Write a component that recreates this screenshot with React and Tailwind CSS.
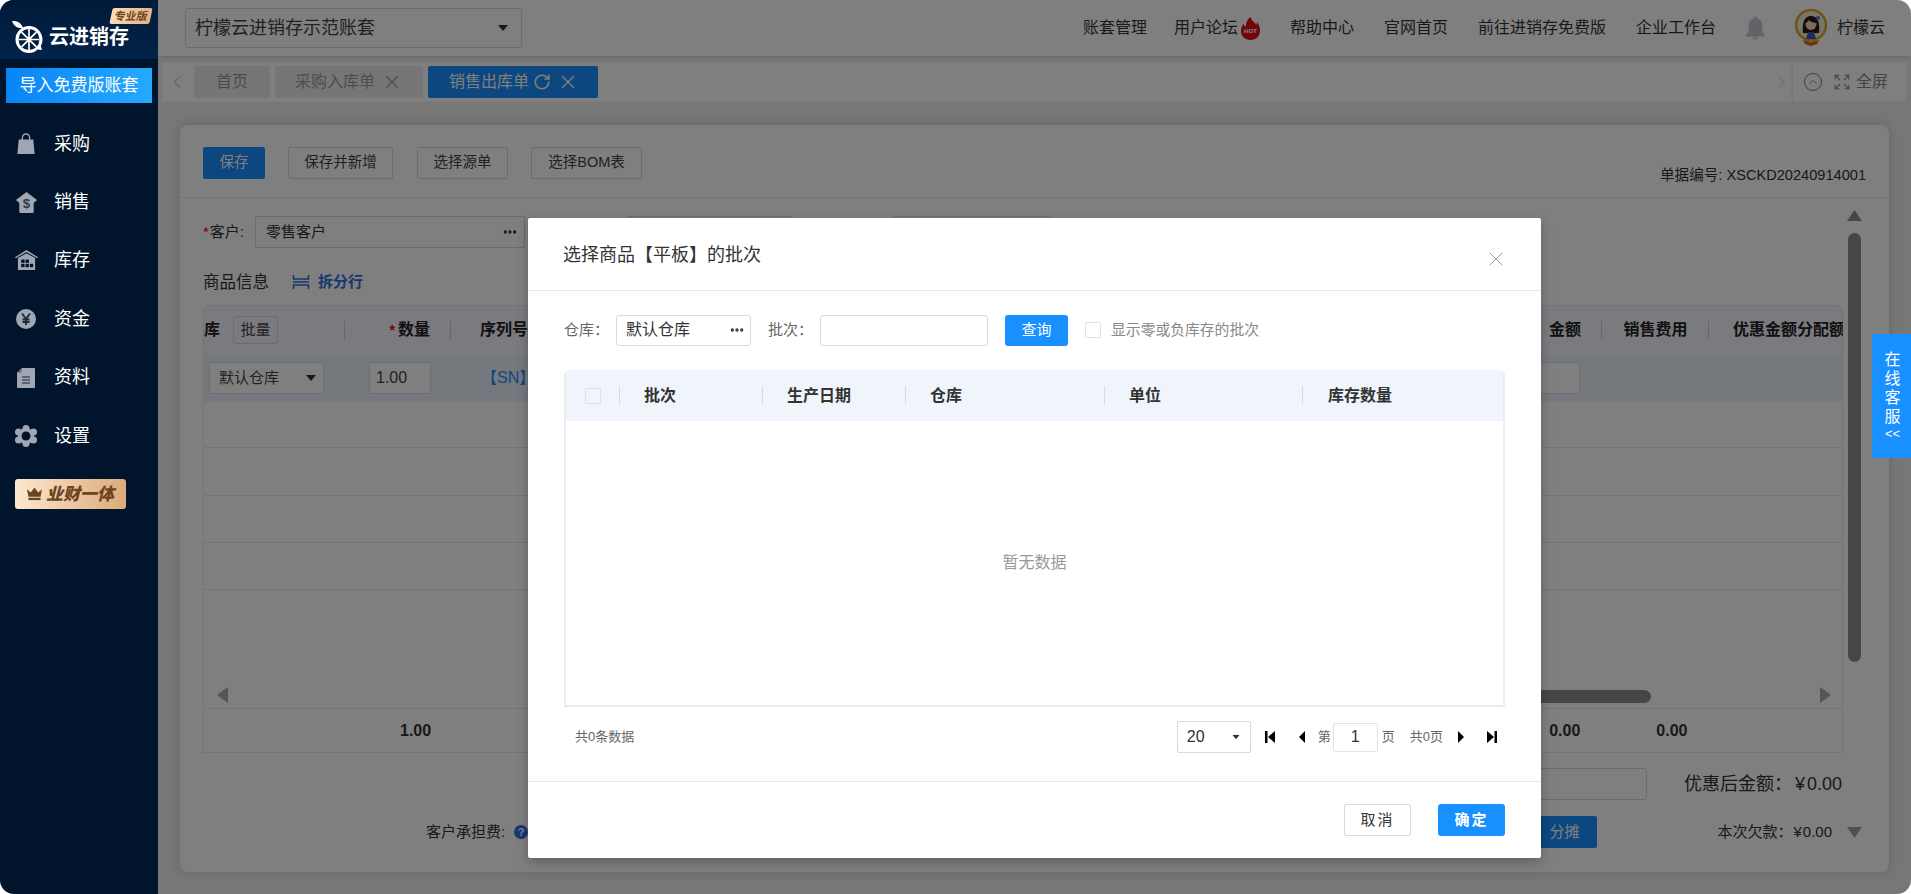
import React from "react";
import { X, RotateCw, ChevronLeft, ChevronRight, ChevronUp, Expand, Ellipsis } from "lucide-react";

const FONT = { fontFamily: '"Liberation Sans", "Noto Sans CJK SC", sans-serif' };

// sidebar icons
const BagIcon = () => (
  <svg width="20" height="22" viewBox="0 0 22 24" fill="#a0a7b2">
    <path d="M3 7h16l1.500 16H1.500z" />
    <path d="M7 9V5a4 4 0 0 1 8 0v4" fill="none" stroke="#a0a7b2" strokeWidth="1.500" />
  </svg>
);
const SaleIcon = () => (
  <svg width="23" height="23" viewBox="0 0 24 24">
    <path d="M12 1l11 8.500-3.500 3V22a1 1 0 0 1-1 1H5.500a1 1 0 0 1-1-1v-9.500L1 9.500z" fill="#a0a7b2" />
    <text x="12" y="17.500" textAnchor="middle" fontSize="14" fontWeight="700" fill="#2b3a4e" style={FONT}>$</text>
  </svg>
);
const HouseIcon = () => (
  <svg width="23" height="21" viewBox="0 0 24 22" fill="#a0a7b2">
    <path d="M12 0L24 7.500l-.8 1.200L12 2 .8 8.700 0 7.500z" />
    <path d="M3 8.500L12 3.500l9 5V21H3z" />
    <g fill="#00152b">
      <rect x="6.500" y="10" width="3.500" height="3.500" />
      <rect x="11" y="10" width="3.500" height="3.500" />
      <rect x="6.500" y="14.500" width="3.500" height="3.500" />
      <rect x="11" y="14.500" width="3.500" height="3.500" />
      <rect x="15.500" y="14.500" width="3.500" height="3.500" />
    </g>
  </svg>
);
const YuanIcon = () => (
  <svg width="20" height="20" viewBox="0 0 20 20">
    <circle cx="10" cy="10" r="10" fill="#a0a7b2" />
    <path d="M6 4.500l4 5.500 4-5.500M6.500 10.500h7M6.500 13h7M10 10v6" fill="none" stroke="#1d2b3f" strokeWidth="1.900" />
  </svg>
);
const DocIcon = () => (
  <svg width="18" height="20" viewBox="0 0 18 20">
    <path d="M5 0h12a1 1 0 0 1 1 1v18a1 1 0 0 1-1 1H1a1 1 0 0 1-1-1V5z" fill="#a0a7b2" />
    <path d="M0 4.500L4.500 0v4.500z" fill="#5d6877" />
    <path d="M5 9h8M5 12h8M5 15h8" stroke="#46525f" strokeWidth="1.300" />
  </svg>
);
const GearIcon = () => (
  <svg width="22" height="22" viewBox="0 0 22 22">
    <g fill="#a0a7b2">
      <circle cx="11" cy="3.500" r="3.500" />
      <circle cx="11" cy="18.500" r="3.500" />
      <circle cx="3.500" cy="7" r="3.500" />
      <circle cx="18.500" cy="7" r="3.500" />
      <circle cx="3.500" cy="15" r="3.500" />
      <circle cx="18.500" cy="15" r="3.500" />
      <circle cx="11" cy="11" r="8" />
    </g>
    <circle cx="11" cy="11" r="4.500" fill="#00152b" />
  </svg>
);

const LemonLogo = () => (
  <svg width="32" height="32" viewBox="0 0 32 32">
    <path d="M0 0c5-.5 9 1.500 11 7-5 .5-9-1.500-11-7z" fill="#fff" />
    <path d="M17 5c7.500 0 13.500 6 13.500 13.500 0 2.500-.6 4.500-1.700 6.400L30 29l-4.500-.6C23.200 30.700 20.300 32 17 32 9.500 32 3.500 26 3.500 18.500S9.500 5 17 5z" fill="#fff" />
    <circle cx="17" cy="18.500" r="10.500" fill="#02203f" />
    <path d="M17 8v21M6.500 18.500h21M9.600 11.100l14.800 14.800M24.400 11.100L9.600 25.900" stroke="#fff" strokeWidth="1.700" />
    <circle cx="17" cy="18.500" r="2.200" fill="#fff" />
  </svg>
);

const Crown = () => (
  <svg width="15" height="14" viewBox="0 0 16 14" fill="#6b4520">
    <path d="M0 2l4 3.500L8 0l4 5.500L16 2l-1.500 8h-13z" />
    <rect x="1.500" y="11" width="13" height="2.500" />
  </svg>
);

const Flame = () => (
  <svg width="19" height="23" viewBox="0 0 20 24">
    <path d="M10 0c1 4 4 5 6 8 1-1 1-2 1-3 2 3 3 6 3 9 0 6-4 10-10 10S0 20 0 14c0-3 1-5 3-7 0 2 1 3 2 3 0-4 2-8 5-10z" fill="#e00f0f" />
    <text x="10" y="17" textAnchor="middle" fontSize="6.500" fontWeight="700" fill="#fff" style={FONT}>HOT</text>
  </svg>
);

const Bell = () => (
  <svg width="19" height="24" viewBox="0 0 20 24" fill="#c4c7cc">
    <path d="M10 0c1 0 1.800.8 1.800 1.800 3.600 1 5.400 4 5.400 8V16l2.800 3.500V21H0v-1.500L2.800 16V9.800c0-3.800 1.800-6.800 5.400-8C8.200.8 9 0 10 0z" />
    <path d="M7 22h6c0 1.200-1.300 2-3 2s-3-.8-3-2z" />
  </svg>
);

const Avatar = () => (
  <svg width="32" height="38" viewBox="0 0 32 38">
    <circle cx="16" cy="16" r="15" fill="#f4ead2" stroke="#e0a425" strokeWidth="2.500" />
    <path d="M8 24c-1-10 1-17 8-17s9 7 8 17z" fill="#2a1a1a" />
    <ellipse cx="16" cy="15" rx="5.500" ry="6" fill="#f8d8c4" />
    <path d="M10 14c1-4 3-6 6-6s5 2 6 6c-3 0-7-1-8-3-1 1-2 3-4 3z" fill="#2a1a1a" />
    <path d="M11 30l2-7h6l2 7z" fill="#3d58b8" />
    <path d="M8 31l8 2 8-2-2 4-6 2-6-2z" fill="#d9631f" />
    <circle cx="23" cy="9" r="2" fill="#4a72d8" />
  </svg>
);

const Caret = ({ className = "" }) => (
  <svg width="10" height="6" viewBox="0 0 10 6" className={className} fill="#333">
    <path d="M0 0h10L5 6z" />
  </svg>
);

const Dots = () => <Ellipsis size={16} strokeWidth={3} className="text-[#333]" />;

const TriLeft = () => (
  <svg width="8" height="12" viewBox="0 0 8 12" fill="#000"><path d="M7 0v12L1 6z" /></svg>
);
const TriRight = () => (
  <svg width="8" height="12" viewBox="0 0 8 12" fill="#000"><path d="M1 0v12l6-6z" /></svg>
);
const FirstIcon = () => (
  <svg width="10" height="12" viewBox="0 0 10 12" fill="#000"><path d="M0 0h2.500v12H0zM10 0v12L3 6z" /></svg>
);
const LastIcon = () => (
  <svg width="10" height="12" viewBox="0 0 10 12" fill="#000"><path d="M10 0H7.500v12H10zM0 0v12l7-6z" /></svg>
);

const menus = [
  { name: "采购", icon: <BagIcon /> },
  { name: "销售", icon: <SaleIcon /> },
  { name: "库存", icon: <HouseIcon /> },
  { name: "资金", icon: <YuanIcon /> },
  { name: "资料", icon: <DocIcon /> },
  { name: "设置", icon: <GearIcon /> },
];

const Sidebar = () => (
  <aside className="relative z-30 w-[158px] shrink-0 bg-[#00152b]">
    <div className="relative flex h-[59px] items-center bg-gradient-to-b from-[#011a39] to-[#02234a] pl-[12px] pt-[15px]">
      <LemonLogo />
      <span className="ml-[5px] text-[20px] font-bold leading-none text-white">云进销存</span>
      <span className="absolute right-[7px] top-[8px] flex h-[16px] w-[40px] -skew-x-12 items-center justify-center rounded-[2px] bg-gradient-to-r from-[#fbdcb8] to-[#e4b183] text-[11px] font-bold leading-none text-[#6b4520]">
        专业版
      </span>
    </div>
    <div className="ml-[6px] mt-[9px] flex h-[35px] w-[146px] items-center justify-center bg-gradient-to-r from-[#0a84f5] to-[#25aaff] text-[17px] text-white">
      导入免费版账套
    </div>
    <nav className="mt-[12px]">
      {menus.map((m) => (
        <div key={m.name} className="flex h-[58.400px] items-center">
          <span className="flex w-[54px] justify-center pr-[2px]">{m.icon}</span>
          <span className="text-[18px] text-white">{m.name}</span>
        </div>
      ))}
    </nav>
    <div className="ml-[15px] mt-[14px] flex h-[30px] w-[111px] items-center justify-center gap-[4px] rounded-[3px] bg-gradient-to-r from-[#fde8d0] to-[#dcaa7a]">
      <Crown />
      <span className="text-[17px] font-black italic leading-none text-[#6b4520]">业财一体</span>
    </div>
  </aside>
);

const topLinks = ["帮助中心", "官网首页", "前往进销存免费版", "企业工作台"];

const TopBar = () => (
  <header className="flex h-[56px] items-center bg-white pl-[27px] pr-[26px] shadow-[0_1px_4px_rgba(0,0,0,0.12)]">
    <div className="flex h-[40px] w-[337px] items-center justify-between rounded-[2px] border border-[#d9d9d9] pl-[9px] pr-[13px] text-[18px] text-[#444]">
      柠檬云进销存示范账套
      <Caret />
    </div>
    <div className="ml-auto flex items-center gap-[30px] text-[16px] text-[#333]">
      <span className="mr-[-3px]">账套管理</span>
      <span className="flex items-center gap-[3px]">用户论坛<Flame /></span>
      {topLinks.map((t) => (
        <span key={t}>{t}</span>
      ))}
      <Bell />
      <span className="flex items-center gap-[10px]"><Avatar />柠檬云</span>
    </div>
  </header>
);

const TabStrip = () => (
  <div className="ml-[4px] mr-[5px] mt-[6px] flex h-[40px] items-center bg-white">
    <span className="flex w-[28px] justify-center pl-[2px] text-[#aaa]">
      <ChevronLeft size={22} strokeWidth={1} />
    </span>
    <div className="ml-[4px] flex gap-[5px] text-[16px]">
      <span className="flex h-[32px] w-[76px] items-center justify-center rounded-[2px] bg-[#ecedf1] text-[#999]">首页</span>
      <span className="flex h-[32px] w-[148px] items-center justify-center gap-[6px] rounded-[2px] bg-[#ecedf1] text-[#999]">
        采购入库单
        <X size={22} strokeWidth={1.200} />
      </span>
      <span className="flex h-[32px] w-[170px] items-center justify-center gap-[4px] rounded-[2px] bg-[#1890ff] pl-[2px] text-white">
        销售出库单
        <RotateCw size={18} strokeWidth={2.200} />
        <X size={22} strokeWidth={1.500} className="ml-[2px]" />
      </span>
    </div>
    <span className="ml-auto flex w-[20px] justify-center text-[#bbb]">
      <ChevronRight size={22} strokeWidth={1} />
    </span>
    <div className="flex h-[40px] w-[114px] items-center border-l border-[#eee] pl-[11px] text-[#888] shadow-[-1px_0_2px_rgba(0,0,0,0.05)]">
      <span className="flex h-[18px] w-[18px] items-center justify-center rounded-full border border-[#777] text-[#777]">
        <ChevronUp size={14} strokeWidth={1.500} />
      </span>
      <Expand size={18} strokeWidth={1.500} className="ml-[11px]" />
      <span className="ml-[5px] text-[16px]">全屏</span>
    </div>
  </div>
);

const ToolButton = ({ children, className = "" }) => (
  <span className={`flex h-[32px] items-center justify-center rounded-[2px] border border-[#d9d9d9] text-[14.500px] text-[#444] ${className}`}>
    {children}
  </span>
);

const HeadCell = ({ children, className = "" }) => (
  <div className={`relative flex h-full shrink-0 items-center text-[16px] font-bold text-[#222] ${className}`}>{children}</div>
);
const Sep = () => <span className="absolute right-0 top-[15px] h-[18px] w-px bg-[#c8ccd4]" />;

const OrderTable = () => (
  <div className="w-[1640px] overflow-hidden">
    <div className="rounded-t-[6px] border border-b-0 border-[#e5e8ee] bg-[#f2f6ff]">
      <div className="flex h-[48px]">
        <HeadCell className="w-[141px]">
          库
          <span className="ml-[13px] flex h-[28px] w-[45px] items-center justify-center rounded-[3px] border border-[#d9d9d9] text-[15px] font-normal text-[#444]">批量</span>
          <Sep />
        </HeadCell>
        <HeadCell className="w-[106px] justify-end pr-[21px]">
          <span className="mr-[3px] text-[14px] text-[#e00]">*</span>数量
          <Sep />
        </HeadCell>
        <HeadCell className="w-[1098px] pl-[29px]">序列号</HeadCell>
        <HeadCell className="w-[53px] justify-start">金额<Sep /></HeadCell>
        <HeadCell className="w-[107px] justify-center">销售费用<Sep /></HeadCell>
        <HeadCell className="flex-1 whitespace-nowrap pl-[24px] text-[15px]">优惠金额分配额</HeadCell>
      </div>
      <div className="flex h-[48px] items-center bg-[#eaf0fa] text-[15px] text-[#444]">
        <div className="ml-[5px] flex h-[32px] w-[115px] items-center justify-between rounded-[2px] border border-[#d9d9d9] bg-white pl-[9px] pr-[7px]">
          默认仓库
          <Caret />
        </div>
        <div className="ml-[45px] flex h-[32px] w-[62px] items-center rounded-[2px] border border-[#d9d9d9] bg-white pl-[6px] text-[16px]">1.00</div>
        <span className="ml-[50px] text-[16px] text-[#1890ff]">【SN】</span>
        <div className="ml-auto mr-[262px] h-[32px] w-[60px] rounded-[2px] border border-[#d9d9d9] bg-white" />
      </div>
    </div>
    <div className="border-x border-[#e5e8ee]">
      <div className="h-[46px] border-b border-[#e5e8ee]" />
      <div className="h-[48px] border-b border-[#e5e8ee]" />
      <div className="h-[47px] border-b border-[#e5e8ee]" />
      <div className="h-[47px] border-b border-[#e5e8ee]" />
      <div className="flex h-[118px] items-end pb-[5px]">
        <svg width="12" height="16" viewBox="0 0 12 16" className="ml-[13px]" fill="#aaa"><path d="M11 0v16L0 8z" /></svg>
        <div className="ml-[1022px] h-[13px] w-[400px] rounded-full bg-[#8c8c8c]" />
        <svg width="12" height="16" viewBox="0 0 12 16" className="ml-auto mr-[11px]" fill="#aaa"><path d="M1 0v16l11-8z" /></svg>
      </div>
    </div>
    <div className="flex h-[45px] items-center border border-[#e5e8ee] text-[16px] font-bold text-[#333]">
      <span className="ml-[196px]">1.00</span>
      <span className="ml-[1118px]">0.00</span>
      <span className="ml-[76px]">0.00</span>
    </div>
  </div>
);

const MainCard = () => (
  <main className="relative mx-[22px] mb-[22px] mt-[23px] flex-1 rounded-[8px] bg-white shadow-[0_0_12px_rgba(0,0,0,0.15)]">
    <div className="flex h-[73px] items-start border-b border-[#e8e8e8] px-[23px] pt-[22px]">
      <span className="flex h-[32px] w-[62px] items-center justify-center rounded-[2px] bg-[#1890ff] text-[14.500px] text-white">保存</span>
      <ToolButton className="ml-[23px] w-[105px]">保存并新增</ToolButton>
      <ToolButton className="ml-[24px] w-[91px]">选择源单</ToolButton>
      <ToolButton className="ml-[23px] w-[111px]">选择BOM表</ToolButton>
      <span className="ml-auto mt-[18px] text-[14.600px] text-[#333]">单据编号: XSCKD20240914001</span>
    </div>
    <div className="mt-[18px] flex items-center px-[23px] text-[15px] text-[#333]">
      <span className="w-[52px]"><span className="mr-[1px] text-[#e00]">*</span>客户:</span>
      <div className="flex h-[32px] w-[270px] items-center justify-between rounded-[2px] border border-[#d9d9d9] pl-[10px] pr-[6px]">
        零售客户
        <Dots />
      </div>
      <div className="ml-[102px] h-[32px] w-[165px] rounded-[2px] border border-[#d9d9d9]" />
      <div className="ml-[101px] h-[32px] w-[157px] rounded-[2px] border border-[#d9d9d9]" />
    </div>
    <div className="mt-[23px] flex h-[22px] items-center px-[23px]">
      <span className="text-[16.500px] text-[#333]">商品信息</span>
      <svg width="18" height="18" viewBox="0 0 18 18" className="ml-[23px]" fill="none" stroke="#2d6fe0" strokeWidth="1.500">
        <path d="M1.500 2v4h15V2M1 9h16M1.500 16v-4h15v4" />
      </svg>
      <span className="ml-[8px] text-[15px] font-bold text-[#2d6fe0]">拆分行</span>
    </div>
    <div className="mt-[12px] px-[23px]">
      <OrderTable />
    </div>
    <div className="mt-[15px] flex items-center justify-end pr-[47px] text-[18px] text-[#333]">
      <div className="h-[32px] w-[120px] rounded-[2px] border border-[#d9d9d9]" />
      <span className="ml-[37px]">优惠后金额：</span>
      <span className="ml-[3px]">¥<span className="ml-[2px]">0.00</span></span>
    </div>
    <div className="mt-[16px] flex items-center pl-[246px] pr-[57px] text-[15px] text-[#333]">
      <span>客户承担费:</span>
      <span className="ml-[9px] flex h-[14px] w-[14px] items-center justify-center rounded-full bg-[#2f6fe8] text-[11px] font-bold text-white">?</span>
      <span className="ml-auto flex h-[32px] w-[66px] items-center justify-center rounded-[2px] bg-[#1890ff] text-white">分摊</span>
      <span className="ml-[120px]">本次欠款：</span>
      <span className="ml-[1px]">¥<span className="ml-[1px]">0.00</span></span>
    </div>
    {/* page scrollbar */}
    <div className="absolute bottom-[34px] right-[27px] top-[85px] flex w-[15px] flex-col items-center">
      <svg width="15" height="11" viewBox="0 0 15 11" fill="#8c8c8c"><path d="M7.500 0L15 11H0z" /></svg>
      <div className="mt-[12px] h-[429px] w-[13px] rounded-full bg-[#8c8c8c]" />
      <svg width="15" height="11" viewBox="0 0 15 11" fill="#a0a0a0" className="mt-auto"><path d="M0 0h15L7.500 11z" /></svg>
    </div>
  </main>
);

const columns = [
  { name: "批次", w: "w-[143px]" },
  { name: "生产日期", w: "w-[143px]" },
  { name: "仓库", w: "w-[199px]" },
  { name: "单位", w: "w-[198px]" },
];

const Modal = () => (
  <div className="absolute inset-0 z-20 flex justify-center pt-[218px]">
    <div className="h-[640px] w-[1013px] rounded-[2px] bg-white text-[#333] shadow-[0_4px_12px_rgba(0,0,0,0.25)]">
      <div className="flex h-[73px] items-center justify-between border-b border-[#e8e8e8] pl-[35px] pr-[33px]">
        <span className="mt-[2px] text-[18px] text-[#333]">选择商品【平板】的批次</span>
        <X size={24} strokeWidth={1} className="mt-[10px] text-[#999]" />
      </div>
      <div className="mt-[23px] flex h-[32px] items-center px-[36px] text-[15px]">
        <span className="text-[#666]">仓库：</span>
        <div className="ml-[7px] flex h-[31px] w-[135px] items-center justify-between rounded-[3px] border border-[#d9d9d9] pl-[9px] pr-[5px] text-[16px]">
          默认仓库
          <Dots />
        </div>
        <span className="ml-[17px] text-[#666]">批次：</span>
        <div className="ml-[7px] h-[31px] w-[168px] rounded-[3px] border border-[#d9d9d9]" />
        <span className="ml-[17px] flex h-[31px] w-[63px] items-center justify-center rounded-[3px] bg-[#1890ff] text-white">查询</span>
        <span className="ml-[17px] h-[16px] w-[16px] rounded-[2px] border border-[#dde1e8]" />
        <span className="ml-[10px] text-[14.800px] text-[#888]">显示零或负库存的批次</span>
      </div>
      <div className="mx-[36px] mt-[24px] h-[337px] overflow-hidden rounded-t-[6px] border-x-2 border-b-2 border-[#e8edf3]">
        <div className="flex h-[51px] items-center bg-[#f0f4fb] text-[16px] font-bold text-[#333]">
          <div className="relative flex h-full w-[54px] shrink-0 items-center pl-[19px]">
            <span className="h-[16px] w-[16px] rounded-[2px] border border-[#dde1e8] bg-[#f0f4fb]" />
            <span className="absolute right-0 top-[16px] h-[18px] w-px bg-[#d5d9e0]" />
          </div>
          {columns.map((c) => (
            <div key={c.name} className={`relative flex h-full shrink-0 items-center pl-[24px] ${c.w}`}>
              {c.name}
              <span className="absolute right-0 top-[16px] h-[18px] w-px bg-[#d5d9e0]" />
            </div>
          ))}
          <div className="pl-[25px]">库存数量</div>
        </div>
        <div className="flex h-[284px] items-center justify-center text-[16px] text-[#999]">暂无数据</div>
      </div>
      <div className="mx-[37px] mt-[14px] flex h-[32px] items-center text-[13px] text-[#666]">
        <span className="ml-[10px]">共0条数据</span>
        <div className="ml-auto flex h-[32px] w-[74px] items-center justify-between rounded-[2px] border border-[#d9d9d9] pl-[9px] pr-[9px] text-[16px] text-[#333]">
          20
          <Caret className="scale-75" />
        </div>
        <span className="ml-[14px]"><FirstIcon /></span>
        <span className="ml-[23px]"><TriLeft /></span>
        <span className="ml-[12px]">第</span>
        <div className="ml-[2px] flex h-[29px] w-[45px] items-center justify-center rounded-[2px] border border-[#e0e3e8] text-[16px] text-[#333]">1</div>
        <span className="ml-[4px]">页</span>
        <span className="ml-[15px]">共0页</span>
        <span className="ml-[14px]"><TriRight /></span>
        <span className="ml-[22px] mr-[7px]"><LastIcon /></span>
      </div>
      <div className="mt-[28px] flex h-[77px] items-center justify-end gap-[27px] border-t border-[#e8e8e8] pr-[36px] text-[15px]">
        <span className="flex h-[32px] w-[67px] items-center justify-center rounded-[2px] border border-[#d9d9d9] tracking-[2px] text-[#333]">取消</span>
        <span className="flex h-[32px] w-[67px] items-center justify-center rounded-[3px] bg-[#1890ff] font-bold tracking-[2px] text-white">确定</span>
      </div>
    </div>
  </div>
);

export default function App() {
  return (
    <div className="h-screen w-full overflow-hidden bg-white" style={FONT}>
      <div className="relative flex h-full overflow-hidden rounded-[14px] bg-[#eeeeee]">
        <Sidebar />
        <div className="relative flex min-w-0 flex-1 flex-col">
          <TopBar />
          <TabStrip />
          <MainCard />
          {/* dim layer under the dialog */}
          <div className="absolute inset-0 z-10 bg-black/50" />
          <Modal />
        </div>
        <div className="absolute right-0 top-[334px] z-30 flex h-[124px] w-[39px] flex-col items-center justify-center bg-[#1890ff] pl-[2px] text-[16px] leading-[19px] text-white">
          <span>在</span>
          <span>线</span>
          <span>客</span>
          <span>服</span>
          <span className="text-[13px] leading-[16px]">&lt;&lt;</span>
        </div>
      </div>
    </div>
  );
}
